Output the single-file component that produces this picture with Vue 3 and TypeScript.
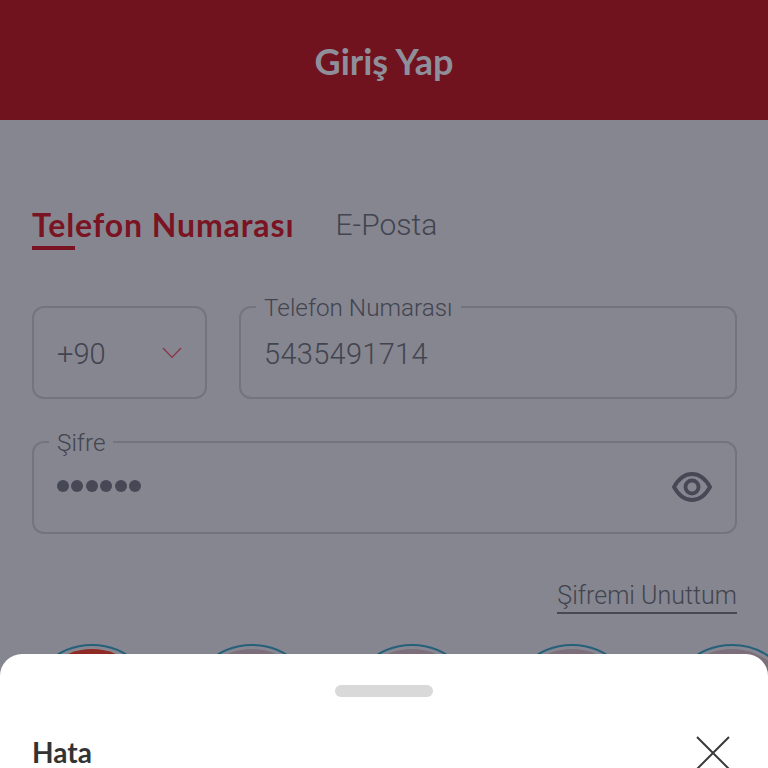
<script setup lang="ts">
const slides = [
  { id: 1, fill: '#8f2a24' },
  { id: 2, fill: '#7c6f7b' },
  { id: 3, fill: '#7c6f7b' },
  { id: 4, fill: '#7c6f7b' },
  { id: 5, fill: '#7c6f7b' },
]
</script>

<template>
  <div class="screen">
    <header class="bar">Giriş Yap</header>
    <main class="content">
      <nav class="tabs">
        <div class="tab active">Telefon Numarası</div>
        <div class="tab">E-Posta</div>
      </nav>
      <div class="row">
        <div class="box code">
          <span class="val">+90</span>
          <svg width="20" height="12" viewBox="0 0 20 12" fill="none">
            <path d="M1 1 10 10.5 19 1" stroke="#8a3044" stroke-width="1.2" />
          </svg>
        </div>
        <div class="box grow">
          <span class="legend">Telefon Numarası</span>
          <span class="val num">5435491714</span>
        </div>
      </div>
      <div class="box pass">
        <span class="legend">Şifre</span>
        <span class="dots"><i v-for="n in 6" :key="n"></i></span>
        <svg class="eye" width="40" height="32" viewBox="0 0 40 32" fill="none" stroke="#464855" stroke-width="3.8">
          <path d="M2 16C7 7 13 3 20 3s13 4 18 13c-5 9-11 13-18 13S7 25 2 16Z" />
          <circle cx="20" cy="16" r="6.5" />
        </svg>
      </div>
      <div class="forgot-row"><span class="forgot">Şifremi Unuttum</span></div>
      <div class="rings">
        <div v-for="s in slides" :key="s.id" class="ring">
          <div class="disc" :style="{ background: s.fill }"></div>
        </div>
      </div>
    </main>
    <section class="sheet">
      <div class="handle"></div>
      <div class="sheet-head">
        <span class="title">Hata</span>
        <svg width="34" height="34" viewBox="0 0 34 34" fill="none" stroke="#3a3a3a" stroke-width="2">
          <path d="M1 1 33 33M33 1 1 33" />
        </svg>
      </div>
    </section>
  </div>
</template>

<style>
html, body { margin: 0; overflow: hidden; }
</style>

<style scoped>
.screen {
  position: relative;
  width: 768px;
  height: 768px;
  overflow: hidden;
  background: #868690;
  font-family: "Roboto", "Lato", sans-serif;
  color: #42444f;
}
.bar {
  height: 120px;
  padding-top: 2px;
  box-sizing: border-box;
  background: #71131e;
  color: #8f8f9b;
  font-family: "Lato", sans-serif;
  font-weight: 700;
  font-size: 36px;
  display: flex;
  align-items: center;
  justify-content: center;
}
.content { padding: 85px 31px 0 32px; }
.tabs { display: flex; gap: 41px; height: 47px; font-size: 30px; }
.tab { position: relative; line-height: 40px; font-weight: 300; }
.tab.active {
  color: #7a1322;
  font-family: "Lato", sans-serif;
  font-size: 32px;
  font-weight: 700;
  letter-spacing: 0.9px;
}
.tab.active::after {
  content: "";
  position: absolute;
  left: 0;
  top: 41px;
  width: 43px;
  height: 4px;
  background: #7a1322;
}
.row { display: flex; gap: 32px; margin-top: 54px; }
.box {
  position: relative;
  box-sizing: border-box;
  height: 93px;
  border: 2px solid #74747f;
  border-radius: 12px;
  display: flex;
  align-items: center;
  padding: 0 23px;
}
.code { width: 175px; justify-content: space-between; }
.grow { flex: 1; }
.val { font-size: 29px; line-height: 36px; font-weight: 300; padding-top: 2px; }
.num { letter-spacing: 0.3px; }
.legend {
  position: absolute;
  left: 15px;
  top: -14px;
  padding: 0 8px;
  background: #868690;
  font-size: 24.3px;
  font-weight: 300;
  line-height: 28px;
}
.pass { margin-top: 42px; }
.dots { display: flex; gap: 2.4px; margin-top: -3px; }
.dots i { width: 12px; height: 12px; border-radius: 50%; background: #464855; }
.eye { position: absolute; right: 23px; top: 28px; }
.forgot-row { display: flex; justify-content: flex-end; margin-top: 44px; }
.forgot {
  font-size: 25px;
  font-weight: 300;
  line-height: 32px;
  padding-top: 2px;
  border-bottom: 2px solid #464855;
}
.rings { display: flex; gap: 28px; margin-top: 30px; margin-left: -6px; }
.ring {
  flex: none;
  box-sizing: border-box;
  width: 132px;
  height: 132px;
  border-radius: 50%;
  border: 2.5px solid #25607a;
  padding: 3px;
}
.disc { width: 100%; height: 100%; border-radius: 50%; }
.sheet {
  position: absolute;
  left: 0;
  right: 0;
  top: 654px;
  height: 200px;
  background: #fff;
  border-radius: 22px 22px 0 0;
}
.handle {
  width: 98px;
  height: 12px;
  margin: 31px auto 0;
  border-radius: 6px;
  background: #d9d9d9;
}
.sheet-head {
  display: flex;
  justify-content: space-between;
  padding: 39px 38px 0 32px;
  align-items: center;
}
.title {
  font-family: "Lato", sans-serif;
  font-size: 28px;
  line-height: 24px;
  font-weight: 700;
  color: #333;
  margin-bottom: 2px;
}
</style>
